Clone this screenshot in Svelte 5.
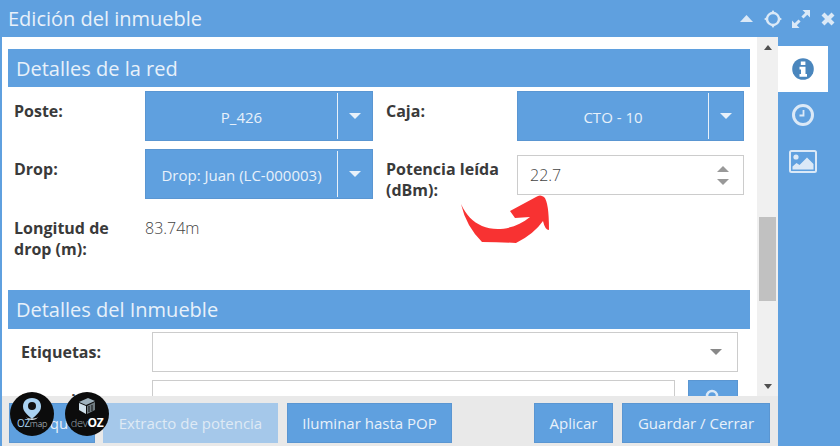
<script>
  const footerLeft = [
    { label: 'Bloque', w: 86, mr: 8 },
    { label: 'Extracto de potencia', w: 175, mr: 9, off: true },
    { label: 'Iluminar hasta POP', w: 165, mr: 0 },
  ];
</script>

<div class="win">
  <header class="title">
    <span class="title-text">Edición del inmueble</span>
    <div class="tools">
      <svg class="up-icon" width="13" height="7" viewBox="0 0 13 7"><path d="M6.500 0 13 7H0z" fill="#dbe9f7" /></svg>
      <svg width="18" height="18" viewBox="0 0 18 18" fill="none" stroke="#dbe9f7"><circle cx="9" cy="9" r="6" stroke-width="2.400" /><path d="M9 0 11.500 3.500h-5zM9 18 6.500 14.500h5zM0 9 3.500 6.500v5zM18 9 14.500 11.500v-5z" fill="#dbe9f7" stroke="none" /></svg>
      <svg width="18" height="18" viewBox="0 0 18 18" fill="#dbe9f7"><path d="M10.500 0H18v7.500l-2.700-2.700-3.800 3.800L9.400 6.500l3.800-3.800zM0 18v-7.500l2.700 2.700 3.800-3.800 2.100 2.100-3.800 3.800L7.500 18z" /></svg>
      <svg class="close-icon" width="14" height="14" viewBox="0 0 14 14" stroke="#dbe9f7" stroke-width="4.200"><path d="M2 2 12 12M12 2 2 12" /></svg>
    </div>
  </header>

  <div class="body">
    <div class="main">
      <div class="scroll-wrap">
        <form class="form">
          <h3 class="section">Detalles de la red</h3>
          <div class="grid">
            <span class="lbl">Poste:</span>
            <div class="select"><span class="val">P_426</span><span class="caret"><i></i></span></div>
            <span class="lbl right">Caja:</span>
            <div class="select"><span class="val">CTO - 10</span><span class="caret"><i></i></span></div>

            <span class="lbl">Drop:</span>
            <div class="select"><span class="val">Drop: Juan (LC-000003)</span><span class="caret"><i></i></span></div>
            <span class="lbl right">Potencia leída (dBm):</span>
            <div class="num">
              <span>22.7</span>
              <div class="spin"><b class="up"></b><b class="down"></b></div>
            </div>
          </div>
          <div class="length">
            <span class="lbl">Longitud de drop (m):</span>
            <span class="plain">83.74m</span>
          </div>

          <h3 class="section second">Detalles del Inmueble</h3>
          <div class="row tags">
            <span class="lbl">Etiquetas:</span>
            <div class="input wide"><i class="tri"></i></div>
          </div>
          <div class="row">
            <span class="lbl">Dirección:</span>
            <div class="input"></div>
            <div class="search">
              <svg width="20" height="20" viewBox="0 0 20 20" fill="none" stroke="#dbe9f7" stroke-width="2.500"><circle cx="9" cy="9" r="5" /><path d="M13 13l5 5" /></svg>
            </div>
          </div>
        </form>
        <div class="scrollbar">
          <i class="sb-up"></i>
          <div class="thumb"></div>
          <i class="sb-down"></i>
        </div>
      </div>

      <footer class="footer">
        <div class="group">
          {#each footerLeft as b}
            <button type="button" class:off={b.off} style="width:{b.w}px;margin-right:{b.mr}px">{b.label}</button>
          {/each}
        </div>
        <div class="group">
          <button type="button" class="apply">Aplicar</button>
          <button type="button" class="save">Guardar / Cerrar</button>
        </div>
      </footer>
    </div>

    <nav class="side">
      <div class="tab active">
        <svg width="22" height="22" viewBox="0 0 22 22"><circle cx="11" cy="11" r="10.800" fill="#4a86bd" /><path d="M8.800 3.500h4.600v3.600H8.800zM7.500 8.800h6v7.200H15v2.800H7.500V16H9v-4.400H7.500z" fill="#fff" /></svg>
      </div>
      <div class="tab">
        <svg width="22" height="22" viewBox="0 0 22 22" fill="none" stroke="#dbe9f7"><circle cx="11" cy="11" r="9.500" stroke-width="3" /><path d="M11.500 6v5.500H7.500" stroke-width="1.800" /></svg>
      </div>
      <div class="tab">
        <svg width="28" height="23" viewBox="0 0 28 23"><rect x="1" y="1" width="26" height="21" rx="1.500" fill="none" stroke="#dbe9f7" stroke-width="2" /><circle cx="7" cy="7" r="2.600" fill="#dbe9f7" /><path d="M3.500 19.500v-3l4-3.500 3 2 7.500-7.500 6.500 6.500v5.500z" fill="#dbe9f7" /></svg>
      </div>
    </nav>
  </div>

  <svg class="arrow" width="92" height="52" viewBox="0 0 92 52">
    <path d="M1 10C6 21 13 28 22 32 36 38 56 35 70 23L55 24 50 17 76 3Q80 0 84 3 89 8 89 36 85 36 83 27 74 40 56 49 40 48 22 48 6 32 1 10Z" fill="#f83232" />
  </svg>

  <div class="badge one">
    <svg width="20" height="26" viewBox="0 0 20 26"><path d="M10 0C4 0 1 4 1 8.500 1 14 6 17 10 21 14 17 19 14 19 8.500 19 4 16 0 10 0Z" fill="#a9d2f2" /><circle cx="10" cy="8" r="4" fill="#111" /><path d="M4 19c2 4 10 4 12 0-2 2-10 2-12 0z" fill="#dfe8ee" /></svg>
    <span class="badge-text">OZ<small>map</small></span>
  </div>
  <div class="badge two">
    <svg width="18" height="17" viewBox="0 0 18 17"><path d="M1 5 10 1 17 4 8 8z" fill="#9fb2bd" /><path d="M1 6l7 3v8L1 13z" fill="#cfe0ea" /><path d="M9 9l8-4v8l-8 4z" fill="#6f7b80" /><path d="M11 9v6M14 8v6" stroke="#111" /></svg>
    <span class="badge-text dev"><small>dev</small><b>OZ</b></span>
  </div>
</div>

<style>
  :global(body) {
    margin: 0;
    overflow: hidden;
  }

  .win {
    position: relative;
    width: 840px;
    height: 446px;
    overflow: hidden;
    background: #5fa0df;
    font-family: "Open Sans", "DejaVu Sans", sans-serif;
    color: #333;
  }

  .title {
    height: 37px;
    display: flex;
    align-items: center;
    justify-content: space-between;
    padding: 0 5px 0 8px;
    box-sizing: border-box;
  }

  .title-text {
    font-size: 20px;
    color: #e8f1fa;
  }

  .tools {
    display: flex;
    align-items: center;
    gap: 10px;
  }

  .up-icon {
    margin-right: 1px;
  }

  .close-icon {
    margin-left: 1px;
  }

  .body {
    display: flex;
    height: 409px;
    padding-left: 2px;
    box-sizing: border-box;
  }

  .main {
    width: 776px;
    display: flex;
    flex-direction: column;
    background: #fff;
  }

  .scroll-wrap {
    height: 359px;
    display: flex;
    overflow: hidden;
  }

  .form {
    width: 755px;
    padding: 12px 7px 0 6px;
    box-sizing: border-box;
    overflow: hidden;
  }

  .section {
    margin: 0;
    height: 38px;
    line-height: 39px;
    padding-left: 8px;
    background: #5fa0df;
    color: #e8f1fa;
    font-size: 20px;
    font-weight: 400;
  }

  .section.second {
    height: 39px;
    line-height: 40px;
    margin-top: 24px;
  }

  .grid {
    display: grid;
    grid-template-columns: 131px 228px 144px 227px;
    grid-auto-rows: 50px;
    row-gap: 8px;
    margin-top: 4px;
    padding-left: 6px;
  }

  .lbl {
    font-size: 16px;
    font-weight: 700;
    line-height: 21px;
    color: #3a3a3a;
  }

  .grid .lbl {
    padding-top: 10px;
  }

  .grid .lbl.right {
    padding-left: 13px;
  }

  .select {
    display: flex;
    background: #5fa0df;
    border: 1px solid #5a96d2;
    box-sizing: border-box;
    color: #e8f1fa;
    font-size: 15px;
  }

  .val {
    flex: 1;
    display: flex;
    align-items: center;
    justify-content: center;
    border-right: 1px solid #e8f1fa;
    margin: 1px 0;
    padding-top: 1px;
  }

  .caret {
    width: 34px;
    display: flex;
    align-items: center;
    justify-content: center;
  }

  .caret i {
    border-top: 6px solid #e8f1fa;
    border-left: 6.500px solid transparent;
    border-right: 6.500px solid transparent;
  }

  .num {
    margin-top: 6px;
    height: 40px;
    border: 1px solid #ccc;
    box-sizing: border-box;
    display: flex;
    align-items: center;
    justify-content: space-between;
    padding: 0 14px 0 12px;
    font-size: 16px;
    font-weight: 300;
    color: #444;
  }

  .spin {
    display: flex;
    flex-direction: column;
    gap: 7px;
  }

  .spin b {
    width: 0;
    height: 0;
    border-left: 6px solid transparent;
    border-right: 6px solid transparent;
  }

  .spin .up {
    border-bottom: 6px solid #999;
  }

  .spin .down {
    border-top: 6px solid #999;
  }

  .length {
    display: grid;
    grid-template-columns: 131px 150px;
    padding: 19px 0 0 6px;
    height: 48px;
  }

  .length .lbl {
    width: 110px;
  }

  .plain {
    font-size: 16px;
    font-weight: 300;
    line-height: 21px;
    color: #444;
  }

  .row {
    display: flex;
    margin-top: 8px;
    padding-left: 13px;
    height: 40px;
  }

  .row.tags {
    margin-top: 3px;
  }

  .row .lbl {
    width: 131px;
    padding-top: 10px;
    flex: none;
  }

  .input {
    width: 523px;
    border: 1px solid #ccc;
    box-sizing: border-box;
    display: flex;
    align-items: center;
    justify-content: flex-end;
    padding-right: 15px;
  }

  .input.wide {
    width: 586px;
  }

  .tri {
    border-left: 6px solid transparent;
    border-right: 6px solid transparent;
    border-top: 6px solid #888;
  }

  .search {
    margin-left: 13px;
    width: 50px;
    height: 40px;
    background: #5fa0df;
    border: 1px solid #5a96d2;
    box-sizing: border-box;
    display: flex;
    justify-content: center;
    padding-top: 6px;
  }

  .scrollbar {
    width: 21px;
    background: #f0f0f0;
    display: flex;
    flex-direction: column;
    align-items: center;
  }

  .sb-up,
  .sb-down {
    width: 0;
    height: 0;
    border-left: 4.500px solid transparent;
    border-right: 4.500px solid transparent;
  }

  .sb-up {
    border-bottom: 5px solid #505050;
    margin-top: 8px;
  }

  .thumb {
    width: 17px;
    height: 84px;
    margin-top: 167px;
    background: #c1c1c1;
  }

  .sb-down {
    border-top: 5px solid #505050;
    margin-top: auto;
    margin-bottom: 7px;
  }

  .footer {
    height: 50px;
    background: #e9e9e9;
    display: flex;
    justify-content: space-between;
    padding: 7px 8px 3px 7px;
    box-sizing: border-box;
  }

  .group {
    display: flex;
  }

  button {
    height: 40px;
    padding: 0;
    background: #5fa0df;
    border: 1px solid #5a96d2;
    color: #e8f1fa;
    font-family: inherit;
    font-size: 15px;
    box-sizing: border-box;
  }

  button.off {
    background: #a5c8ea;
    border-color: #a5c8ea;
    color: #dfeaf5;
  }

  .apply {
    width: 79px;
    margin-right: 9px;
  }

  .save {
    width: 148px;
  }

  .side {
    flex: 1;
    padding-top: 9px;
  }

  .tab {
    width: 50px;
    height: 46px;
    display: flex;
    align-items: center;
    justify-content: center;
  }

  .tab.active {
    background: #fff;
  }

  .arrow {
    position: absolute;
    left: 460px;
    top: 194px;
  }

  .badge {
    position: absolute;
    top: 392px;
    width: 44px;
    height: 44px;
    border-radius: 50%;
    background: #0c0c0c;
    display: flex;
    flex-direction: column;
    align-items: center;
    padding-top: 6px;
    box-sizing: border-box;
  }

  .badge.one {
    left: 10px;
  }

  .badge.two {
    left: 65px;
    padding-top: 5px;
  }

  .badge-text {
    position: absolute;
    bottom: 7px;
    left: 0;
    right: 0;
    text-align: center;
    font-size: 10px;
    line-height: 10px;
    letter-spacing: -0.3px;
    color: #a9d2f2;
  }

  .badge-text small {
    font-size: 9px;
    font-weight: 300;
    color: #c8d4dc;
  }

  .badge-text.dev {
    font-size: 12px;
    bottom: 8px;
    color: #fff;
  }

  .badge-text.dev small {
    font-size: 11px;
    color: #9aa6ad;
  }
</style>
